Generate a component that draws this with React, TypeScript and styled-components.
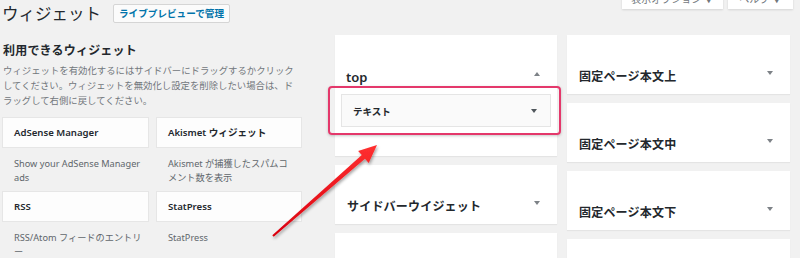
import styled, { createGlobalStyle } from 'styled-components';

const GlobalStyle = createGlobalStyle`
  html, body {
    margin: 0;
    padding: 0;
    background: #f1f1f1;
    overflow: hidden;
  }
  body {
    font-family: "Noto Sans", "Noto Sans CJK JP", sans-serif;
    color: #23282d;
  }
`;

const available = [
  { title: 'AdSense Manager', desc: 'Show your AdSense Manager ads' },
  { title: 'Akismet ウィジェット', desc: 'Akismet が捕獲したスパムコメント数を表示' },
  { title: 'RSS', desc: 'RSS/Atom フィードのエントリー' },
  { title: 'StatPress', desc: 'StatPress' },
];

const rightAreas = ['固定ページ本文上', '固定ページ本文中', '固定ページ本文下'];

const App = () => {
  return (
    <Page>
      <GlobalStyle />
      <ScreenMeta>
        <MetaTab $width={101}>表示オプション ▼</MetaTab>
        <MetaTab $width={65}>ヘルプ ▼</MetaTab>
      </ScreenMeta>

      <Header>
        <Title>ウィジェット</Title>
        <TitleButton>ライブプレビューで管理</TitleButton>
      </Header>

      <Columns>
        <Available>
          <SectionTitle>利用できるウィジェット</SectionTitle>
          <SectionDesc>
            ウィジェットを有効化するにはサイドバーにドラッグするかクリックしてください。ウィジェットを無効化し設定を削除したい場合は、ドラッグして右側に戻してください。
          </SectionDesc>
          <WidgetGrid>
            {available.map((w) => (
              <WidgetItem key={w.title}>
                <WidgetCard>{w.title}</WidgetCard>
                <WidgetDesc>{w.desc}</WidgetDesc>
              </WidgetItem>
            ))}
          </WidgetGrid>
        </Available>

        <SidebarColumn $width={223}>
          <Panel>
            <PanelHead $flat>
              <PanelTitle $latin>top</PanelTitle>
              <Toggle $up />
            </PanelHead>
            <Highlight>
              <PlacedWidget>
                <PlacedTitle>テキスト</PlacedTitle>
                <Toggle $dark />
              </PlacedWidget>
            </Highlight>
            <PanelFoot />
          </Panel>
          <Panel>
            <PanelHead>
              <PanelTitle>サイドバーウイジェット</PanelTitle>
              <Toggle />
            </PanelHead>
          </Panel>
          <Panel $stub />
        </SidebarColumn>

        <SidebarColumn $width={224}>
          {rightAreas.map((name) => (
            <Panel key={name}>
              <PanelHead>
                <PanelTitle>{name}</PanelTitle>
                <Toggle />
              </PanelHead>
            </Panel>
          ))}
          <Panel $stub />
        </SidebarColumn>
      </Columns>

      <Pointer width="800" height="258" viewBox="0 0 800 258">
        <defs>
          <linearGradient id="arrowFill" x1="0" y1="0" x2="0" y2="1">
            <stop offset="0" stopColor="#ff3030" />
            <stop offset="1" stopColor="#d9000f" />
          </linearGradient>
          <filter id="arrowShadow" x="-20%" y="-20%" width="140%" height="140%">
            <feDropShadow dx="1" dy="2" stdDeviation="1.4" floodColor="#000" floodOpacity="0.35" />
          </filter>
        </defs>
        <polygon
          points="272.3,235.2 361.8,155 358.1,150.9 377,145 368.7,162.9 365,158.8 273.7,236.8"
          fill="url(#arrowFill)"
          filter="url(#arrowShadow)"
        />
      </Pointer>
    </Page>
  );
};

const Page = styled.div`
  position: relative;
  width: 800px;
  height: 258px;
  padding: 3px 0 0 2px;
  box-sizing: border-box;
  overflow: hidden;
`;

const ScreenMeta = styled.div`
  position: absolute;
  top: -11px;
  right: 7px;
  display: flex;
  gap: 5px;
`;

const MetaTab = styled.div<{ $width: number }>`
  width: ${(p) => p.$width}px;
  height: 20px;
  background: #fff;
  box-shadow: 0 1px 2px rgba(0, 0, 0, 0.12);
  font-size: 10px;
  line-height: 20px;
  color: #72777c;
  text-align: center;
`;

const Header = styled.div`
  display: flex;
  align-items: center;
  height: 20px;
`;

const Title = styled.h1`
  margin: 0;
  font-family: "Noto Sans CJK JP", sans-serif;
  font-size: 16.5px;
  font-weight: 400;
  line-height: 20px;
  color: #23282d;
`;

const TitleButton = styled.div`
  margin: 1px 0 0 12px;
  width: 117px;
  height: 19px;
  box-sizing: border-box;
  border: 1px solid #d5d5d5;
  background: #fbfbfb;
  border-radius: 2px;
  font-family: "Noto Sans CJK JP", sans-serif;
  font-size: 9.6px;
  font-weight: 700;
  line-height: 17px;
  color: #0073aa;
  text-align: center;
  white-space: nowrap;
`;

const Columns = styled.div`
  display: flex;
  align-items: flex-start;
  margin-top: 12px;
`;

const Available = styled.div`
  width: 300px;
  margin-right: 33px;
`;

const SectionTitle = styled.h2`
  margin: 7px 0 0 1px;
  font-family: "Noto Sans CJK JP", sans-serif;
  font-size: 12px;
  font-weight: 700;
  letter-spacing: 0.2px;
  line-height: 16px;
`;

const SectionDesc = styled.p`
  margin: 5px 0 0 1px;
  width: 296px;
  font-family: "Noto Sans CJK JP", sans-serif;
  font-size: 9.4px;
  line-height: 15px;
  color: #72777c;
`;

const WidgetGrid = styled.div`
  display: grid;
  grid-template-columns: 147px 146px;
  column-gap: 7px;
  margin-top: 9px;
`;

const WidgetItem = styled.div`
  height: 74px;
`;

const WidgetCard = styled.div`
  height: 31px;
  box-sizing: border-box;
  border: 1px solid #e6e6e6;
  background: #fdfdfd;
  padding: 0 11px;
  font-size: 9.6px;
  font-weight: 600;
  line-height: 29px;
  color: #23282d;
  white-space: nowrap;
`;

const WidgetDesc = styled.div`
  padding: 9px 6px 0 12px;
  font-size: 9.2px;
  line-height: 14px;
  color: #60666b;
`;

const SidebarColumn = styled.div<{ $width: number }>`
  width: ${(p) => p.$width}px;
  margin-right: 10px;
  display: flex;
  flex-direction: column;
  gap: 9px;
`;

const Panel = styled.div<{ $stub?: boolean }>`
  background: #fff;
  box-shadow: 0 1px 1px rgba(0, 0, 0, 0.05);
  ${(p) => (p.$stub ? 'height: 40px;' : '')}
`;

const PanelHead = styled.div<{ $flat?: boolean }>`
  display: flex;
  align-items: center;
  justify-content: space-between;
  padding: ${(p) => (p.$flat ? '33px 17px 0 11px' : '32px 17px 9px 12px')};
  height: 18px;
`;

const PanelTitle = styled.h3<{ $latin?: boolean }>`
  margin: 0;
  font-family: ${(p) =>
    p.$latin ? '"Noto Sans", sans-serif' : '"Noto Sans CJK JP", sans-serif'};
  font-size: ${(p) => (p.$latin ? '13px' : '12px')};
  font-weight: ${(p) => (p.$latin ? 600 : 700)};
  letter-spacing: ${(p) => (p.$latin ? '0' : '0.2px')};
  line-height: 18px;
  color: #23282d;
`;

const Toggle = styled.span<{ $up?: boolean; $dark?: boolean }>`
  width: 0;
  height: 0;
  margin-top: ${(p) => (p.$dark ? '1px' : '-6px')};
  border-left: 3px solid transparent;
  border-right: 3px solid transparent;
  ${(p) =>
    p.$up
      ? 'border-bottom: 4px solid #7d8287;'
      : `border-top: 4px solid ${p.$dark ? '#50575c' : '#7d8287'};`}
`;

const Highlight = styled.div`
  margin: 0 -4px 0 -7px;
  padding: 6px 8px 6px 11px;
  border: 2px solid #e4386b;
  border-radius: 4px;
  box-shadow: 0 1px 3px rgba(0, 0, 0, 0.22);
`;

const PlacedWidget = styled.div`
  display: flex;
  align-items: center;
  justify-content: space-between;
  height: 33px;
  box-sizing: border-box;
  padding: 0 13px 0 11px;
  border: 1px solid #e5e5e5;
  background: #fafafa;
`;

const PlacedTitle = styled.span`
  font-family: "Noto Sans CJK JP", sans-serif;
  font-size: 9.5px;
  font-weight: 700;
  color: #23282d;
`;

const PanelFoot = styled.div`
  height: 21px;
`;

const Pointer = styled.svg`
  position: absolute;
  left: 0;
  top: 0;
  pointer-events: none;
`;

export default App;
